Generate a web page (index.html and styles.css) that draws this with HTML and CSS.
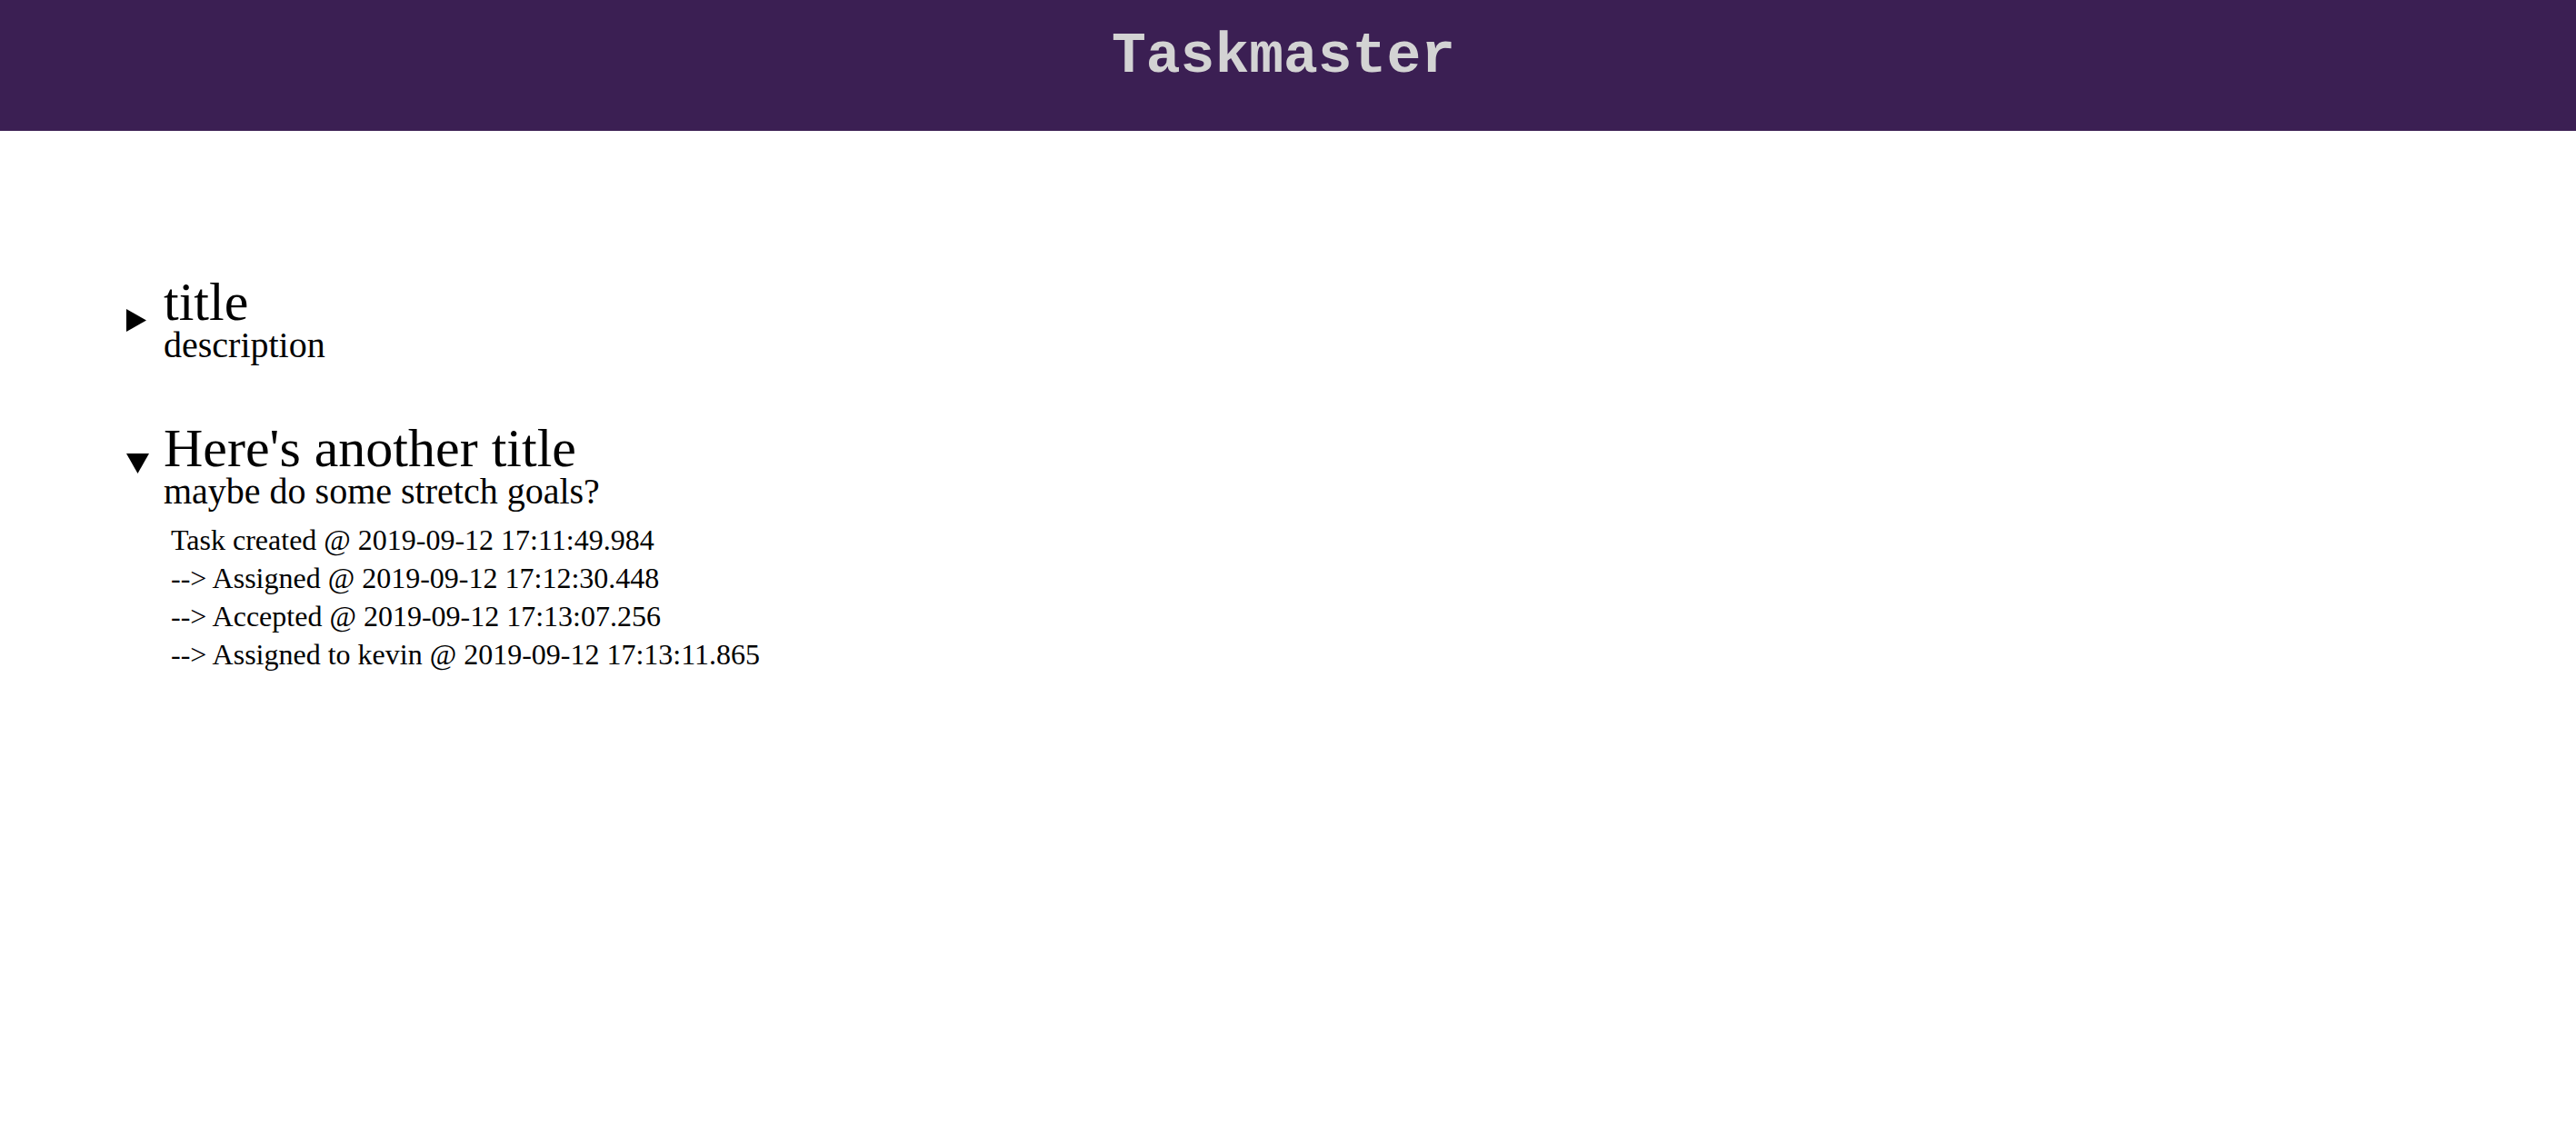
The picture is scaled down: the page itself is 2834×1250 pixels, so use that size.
FILE: index.html
```html
<!DOCTYPE html>
<html lang="en">
<head>
<meta charset="utf-8">
<title>Taskmaster</title>
<link rel="stylesheet" href="styles.css">
</head>
<body>
<header class="app-header">
  <h1 class="app-title">Taskmaster</h1>
</header>
<main class="task-list">
  <details class="task">
    <summary class="task-summary">
      <svg class="marker marker-closed" width="25" height="25" viewBox="0 0 25 25"><polygon points="0,0 22,12.5 0,25" fill="#000"/></svg>
      <div class="task-heading">
        <h2 class="task-title">title</h2>
        <p class="task-desc">description</p>
      </div>
    </summary>
  </details>
  <details class="task" open>
    <summary class="task-summary">
      <svg class="marker marker-open" width="25" height="22" viewBox="0 0 25 22"><polygon points="0,0 25,0 12.5,22" fill="#000"/></svg>
      <div class="task-heading">
        <h2 class="task-title">Here's another title</h2>
        <p class="task-desc">maybe do some stretch goals?</p>
      </div>
    </summary>
    <ul class="history">
      <li class="history-item">Task created @ 2019-09-12 17:11:49.984</li>
      <li class="history-item">--&gt; Assigned @ 2019-09-12 17:12:30.448</li>
      <li class="history-item">--&gt; Accepted @ 2019-09-12 17:13:07.256</li>
      <li class="history-item">--&gt; Assigned to kevin @ 2019-09-12 17:13:11.865</li>
    </ul>
  </details>
</main>
</body>
</html>
```
FILE: styles.css
```css
html, body {
  margin: 0;
  padding: 0;
  background: #ffffff;
  color: #000000;
  font-family: "Liberation Serif", "Times New Roman", serif;
}

.app-header {
  height: 144px;
  background: #3b1f53;
  text-align: center;
  box-sizing: border-box;
  padding: 31px 10px 0 0;
}

.app-title {
  margin: 0;
  font-family: "Liberation Mono", "Courier New", monospace;
  font-weight: bold;
  font-size: 63px;
  line-height: 64px;
  color: #d3d3d3;
}

.task-list {
  padding: 160px 0 0 139px;
}

.task {
  margin: 0 0 65px 0;
}

.task-summary {
  list-style: none;
  display: flex;
  align-items: center;
  gap: 16px;
  cursor: pointer;
}

.task-summary::-webkit-details-marker {
  display: none;
}

.marker {
  display: block;
  flex: none;
}

.marker-open {
  margin-bottom: 6px;
}

.task-title {
  margin: 0;
  font-weight: normal;
  font-size: 60px;
  line-height: 56px;
}

.task-desc {
  margin: 0;
  font-size: 40px;
  line-height: 40px;
}

.history {
  list-style: none;
  margin: 12px 0 0 0;
  padding: 0 0 0 49px;
}

.history-item {
  font-size: 32px;
  line-height: 42px;
}
```
